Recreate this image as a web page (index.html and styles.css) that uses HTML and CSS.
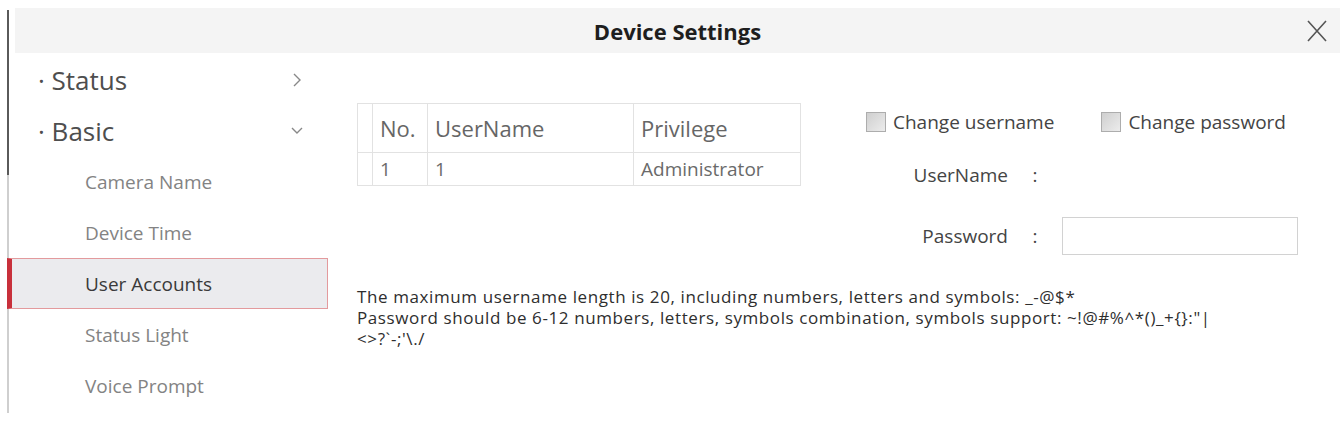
FILE: index.html
```html
<!DOCTYPE html>
<html lang="en">
<head>
<meta charset="utf-8">
<title>Device Settings</title>
<link rel="stylesheet" href="styles.css">
</head>
<body>
<div class="window">
  <div class="edge"></div>
  <div class="main">
    <header class="titlebar">
      <span class="title">Device Settings</span>
      <span class="close" aria-label="Close">
        <svg width="20" height="22" viewBox="0 0 20 22"><path d="M1 1 L19 21 M19 1 L1 21" stroke="#555" stroke-width="1.6" fill="none"/></svg>
      </span>
    </header>
    <div class="body">
      <nav class="sidebar">
        <div class="group"><span>· Status</span>
          <svg class="chev" width="12" height="16" viewBox="0 0 12 16"><path d="M3 2 L9 8 L3 14" stroke="#888" stroke-width="1.4" fill="none"/></svg>
        </div>
        <div class="group"><span>· Basic</span>
          <svg class="chev" width="12" height="16" viewBox="0 0 12 16"><path d="M1 5 L6 10 L11 5" stroke="#888" stroke-width="1.4" fill="none"/></svg>
        </div>
        <div class="item">Camera Name</div>
        <div class="item">Device Time</div>
        <div class="item active">User Accounts</div>
        <div class="item">Status Light</div>
        <div class="item">Voice Prompt</div>
      </nav>
      <section class="content">
        <div class="top">
          <table class="users">
            <thead>
              <tr><th class="sel"></th><th class="no">No.</th><th class="name">UserName</th><th class="priv">Privilege</th></tr>
            </thead>
            <tbody>
              <tr><td class="sel"></td><td>1</td><td>1</td><td>Administrator</td></tr>
            </tbody>
          </table>
          <div class="form">
            <div class="checks">
              <label class="check"><span class="box"></span>Change username</label>
              <label class="check"><span class="box"></span>Change password</label>
            </div>
            <div class="field row-user">
              <span class="lbl">UserName</span><span class="colon">:</span><span class="val"></span>
            </div>
            <div class="field row-pass">
              <span class="lbl">Password</span><span class="colon">:</span><span class="input"></span>
            </div>
          </div>
        </div>
        <div class="notes">
          <p>The maximum username length is 20, including numbers, letters and symbols: _-@$*</p>
          <p>Password should be 6-12 numbers, letters, symbols combination, symbols support: ~!@#%^*()_+{}:"|</p>
          <p>&lt;&gt;?`-;'\./</p>
        </div>
      </section>
    </div>
  </div>
</div>
</body>
</html>
```

FILE: styles.css
```css
* { box-sizing: border-box; }
html, body { margin: 0; padding: 0; background: #fff; }
body {
  font-family: "Open Sans", "Noto Sans", "DejaVu Sans", sans-serif;
  color: #333;
  width: 1340px;
  height: 423px;
  overflow: hidden;
}
.window {
  display: flex;
  padding-top: 8px;
  height: 423px;
}
.edge {
  width: 2px;
  margin-left: 7px;
  margin-top: 2px;
  height: 403px;
  background: linear-gradient(#5a5a5a 0, #5a5a5a 165px, #cfcfcf 165px, #cfcfcf 100%);
}
.main {
  flex: 1;
  display: flex;
  flex-direction: column;
}
.titlebar {
  height: 45px;
  margin-left: 6px;
  background: #f4f4f4;
  display: flex;
  align-items: center;
  justify-content: center;
  position: relative;
}
.title {
  font-weight: 700;
  font-size: 22px;
  color: #1e1e1e;
}
.close {
  position: absolute;
  right: 13px;
  top: 12px;
  width: 20px;
  height: 22px;
  display: block;
}
.close svg { display: block; }
.body {
  display: flex;
  flex: 1;
}
.sidebar {
  width: 319px;
  padding-top: 1px;
  display: flex;
  flex-direction: column;
}
.group, .item {
  height: 51px;
  display: flex;
  align-items: center;
}
.group {
  padding-left: 29px;
  padding-right: 25px;
  justify-content: space-between;
  font-size: 26px;
  color: #4e4e4e;
}
.chev { display: block; }
.item {
  padding-left: 76px;
  font-size: 19px;
  color: #838383;
}
.item.active {
  margin-left: -2px;
  width: 321px;
  padding-left: 73px;
  background: #ebebee;
  border: 1px solid #e39a9d;
  border-left: 5px solid #c8303b;
  color: #3a3a3a;
}
.content {
  flex: 1;
  padding-left: 29px;
  padding-top: 50px;
}
.top {
  display: flex;
  align-items: flex-start;
}
.users {
  border-collapse: collapse;
  border: 1px solid #dcdcdc;
  color: #6a6a6a;
}
.users th, .users td {
  border: 1px solid #e2e2e2;
  padding: 0 0 0 7px;
  text-align: left;
  font-weight: 400;
}
.users th {
  height: 49px;
  font-size: 22px;
  color: #666;
}
.users td {
  height: 33px;
  font-size: 19px;
}
.users .sel { width: 15px; padding: 0; }
.users .no { width: 55px; }
.users .name { width: 206px; }
.users .priv { width: 167px; }
.form {
  margin-left: 65px;
  color: #444;
  font-size: 19px;
}
.checks {
  height: 38px;
  display: flex;
  align-items: center;
  gap: 47px;
}
.check {
  display: flex;
  align-items: center;
  gap: 7px;
}
.box {
  width: 20px;
  height: 20px;
  border: 1px solid #adadad;
  background: linear-gradient(135deg, #cfcfcf, #ececec);
  display: block;
}
.field {
  display: grid;
  grid-template-columns: 142px 54px 236px;
  align-items: center;
  height: 38px;
}
.row-user { margin-top: 15px; }
.row-pass { margin-top: 23px; }
.lbl { text-align: right; }
.colon { text-align: center; }
.input {
  height: 38px;
  border: 1px solid #d2d2d2;
  background: #fff;
  display: block;
}
.notes {
  margin-top: 31px;
  font-size: 17px;
  letter-spacing: 0.6px;
  line-height: 21px;
  color: #2e2e2e;
}
.notes p { margin: 0; }
```
